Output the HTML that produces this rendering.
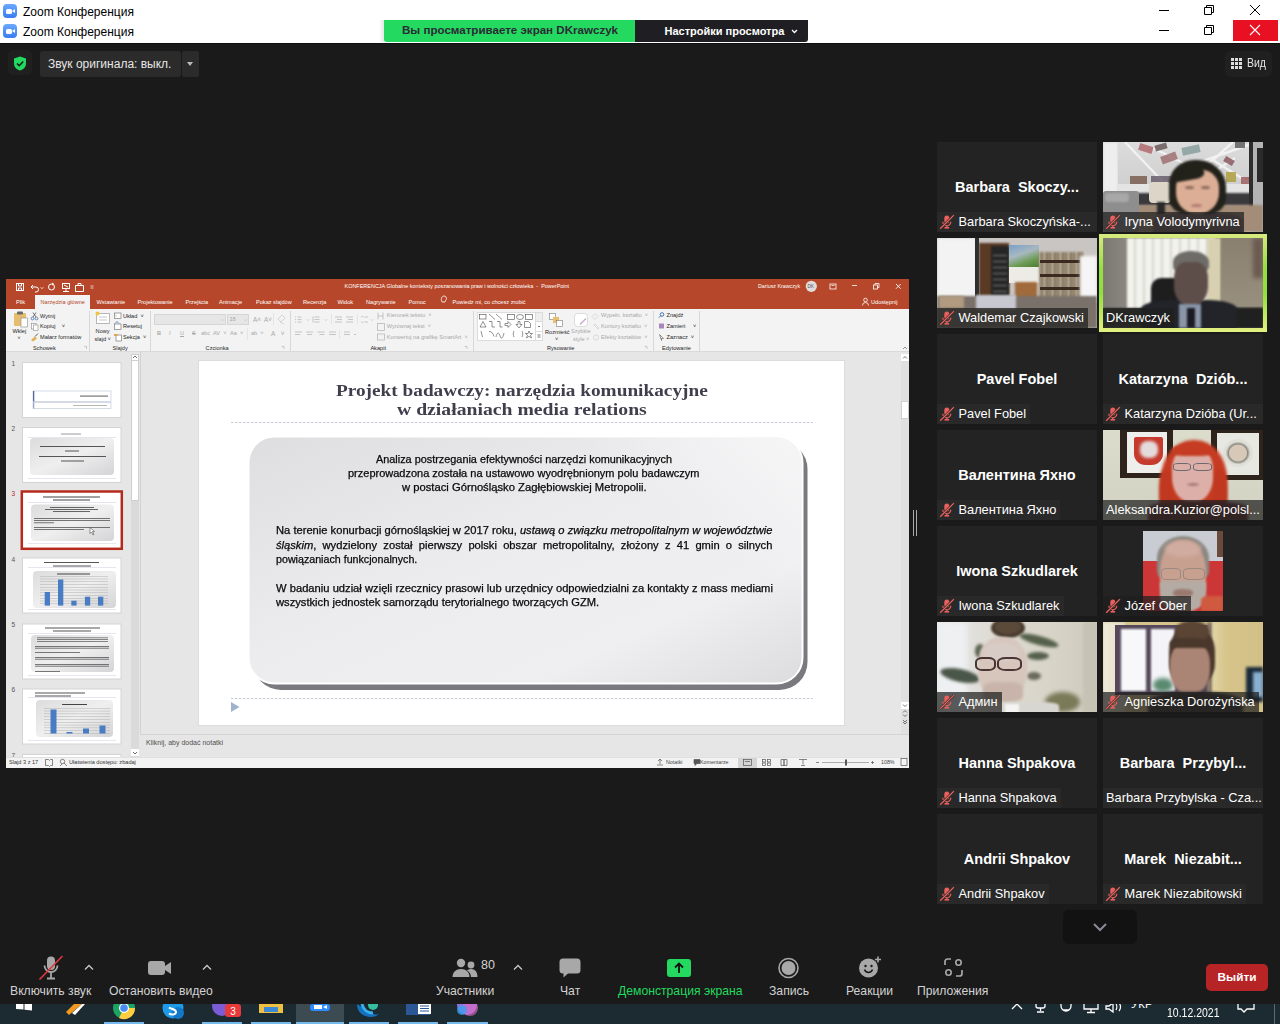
<!DOCTYPE html>
<html><head><meta charset="utf-8">
<style>
*{box-sizing:border-box;margin:0;padding:0}
html,body{width:1280px;height:1024px;overflow:hidden;background:#1a1a1a;font-family:"Liberation Sans",sans-serif}
.a{position:absolute}
.tb{background:#fff;left:0;width:1280px}
.ttl{font-size:12px;color:#000;white-space:nowrap}
.zi{width:14px;height:14px;border-radius:4px;background:linear-gradient(#6aa8ff,#3a7cf0)}
.zi:before{content:"";position:absolute;left:3px;top:4.5px;width:5.5px;height:5px;background:#fff;border-radius:1.5px}
.zi:after{content:"";position:absolute;left:8.5px;top:4.5px;width:0;height:0;border-top:2.5px solid transparent;border-bottom:2.5px solid transparent;border-right:3px solid #fff}
/* participants */
.tile{position:absolute;width:160px;height:90px;background:#232323;overflow:hidden}
.big{position:absolute;left:0;right:0;top:37px;text-align:center;color:#fff;font-weight:bold;font-size:14.5px;white-space:nowrap}
.lab{position:absolute;left:0;bottom:0;height:20px;background:rgba(42,42,42,.92);color:#fff;font-size:12.8px;line-height:20px;white-space:nowrap;padding:0 4px 0 21.5px}
.lab.nm{padding-left:3px}
.tile.v .lab{background:rgba(30,30,30,.72)}
.mic{position:absolute;left:4px;top:3px;width:14px;height:14px}
.tbtn{position:absolute;color:#d2d2d2;font-size:12.2px;white-space:nowrap;text-align:center}
</style></head>
<body>
<!-- title bars -->
<div class="a tb" style="top:0;height:43px"></div><div class="a" style="left:0;top:43px;width:1280px;height:1px;background:#0e0e0e"></div><div class="a" style="left:379px;top:20px;width:6px;height:22px;background:linear-gradient(90deg,rgba(0,0,0,0),rgba(0,0,0,.12))"></div>
<div class="a zi" style="left:3px;top:4px"></div>
<div class="a ttl" style="left:23px;top:5px">Zoom Конференция</div>
<div class="a zi" style="left:3px;top:24px"></div>
<div class="a ttl" style="left:23px;top:25.2px">Zoom Конференция</div>

<!-- green banner -->
<div class="a" style="left:384px;top:20px;width:251px;height:22px;background:#23d95f;border-bottom-left-radius:3px"></div>
<div class="a" style="left:402px;top:24.3px;font-size:11.57px;font-weight:bold;color:#2b2b35;white-space:nowrap">Вы просматриваете экран DKrawczyk</div>
<div class="a" style="left:635px;top:20px;width:173px;height:22px;background:#1f1f23;border-bottom-right-radius:3px"></div>
<div class="a" style="left:664.5px;top:25.4px;font-size:11px;font-weight:bold;color:#fff;white-space:nowrap">Настройки просмотра</div><svg class="a" style="left:791px;top:29px" width="7" height="5" viewBox="0 0 7 5"><path d="M1 1l2.5 2.5L6 1" stroke="#fff" stroke-width="1.3" fill="none"/></svg>


<!-- window controls -->
<svg class="a" style="left:1150px;top:0" width="130" height="42" viewBox="0 0 130 42">
<g stroke="#000" stroke-width="1" fill="none">
<path d="M9 10.5h10"/><path d="M9 30.5h10"/>
<path d="M54.5 7.5h7v7h-7z M56.5 7.5v-2h7v7h-2"/>
<path d="M54.5 27.5h7v7h-7z M56.5 27.5v-2h7v7h-2"/>
<path d="M100 5l10 10M110 5l-10 10"/>
</g>
<rect x="83" y="20" width="45" height="21" fill="#e81123"/>
<path d="M100 25l10 10M110 25l-10 10" stroke="#fff" stroke-width="1.1"/>
</svg>

<!-- top toolbar row -->
<div class="a" style="left:8px;top:50px;width:24px;height:25px;background:#202020;border-radius:5px"></div>
<svg class="a" style="left:13px;top:56px" width="14" height="15" viewBox="0 0 14 15"><path d="M7 0.5L13 2.5V7.5C13 11 10.5 13.5 7 14.5C3.5 13.5 1 11 1 7.5V2.5Z" fill="#23d95f"/><path d="M4 7.5l2.2 2.2L10.2 5.5" stroke="#1a1a1a" stroke-width="1.6" fill="none"/></svg>
<div class="a" style="left:40px;top:51px;width:141px;height:26px;background:#2b2b2b;border-radius:3px"></div>
<div class="a" style="left:48px;top:57.4px;font-size:12px;color:#e6e6e6;white-space:nowrap">Звук оригинала: выкл.</div>
<div class="a" style="left:182px;top:51px;width:17px;height:26px;background:#2b2b2b;border-radius:2px"></div>
<div class="a" style="left:187px;top:62px;width:0;height:0;border-left:3.5px solid transparent;border-right:3.5px solid transparent;border-top:4px solid #bbb"></div>
<div class="a" style="left:1224.5px;top:51px;width:47px;height:26px;background:#202020;border-radius:6px"></div>
<svg class="a" style="left:1231px;top:58px" width="11" height="11" viewBox="0 0 11 11" fill="#ddd"><rect x="0" y="0" width="3" height="3"/><rect x="4" y="0" width="3" height="3"/><rect x="8" y="0" width="3" height="3"/><rect x="0" y="4" width="3" height="3"/><rect x="4" y="4" width="3" height="3"/><rect x="8" y="4" width="3" height="3"/><rect x="0" y="8" width="3" height="3"/><rect x="4" y="8" width="3" height="3"/><rect x="8" y="8" width="3" height="3"/></svg>
<div class="a" style="left:1247px;top:55.9px;font-size:12.2px;color:#e6e6e6;transform-origin:0 0;transform:scaleX(.86)">Вид</div>

<!-- splitter -->
<div class="a" style="left:913px;top:510px;width:1px;height:26px;background:#aaa"></div>
<div class="a" style="left:916px;top:510px;width:1px;height:26px;background:#aaa"></div>

<!-- PPT WINDOW -->
<!--PPT-->
<div class="a" id="ppt" style="left:6px;top:279px;width:903px;height:489px;background:#e6e6e6;overflow:hidden;font-family:'Liberation Sans',sans-serif">
<style>
#ppt .t{position:absolute;white-space:nowrap;font-size:5.6px;color:#262626;line-height:1}
#ppt .w{color:#fff}
#ppt .g{color:#a8a8a8}
</style>
<!-- title bar + tabs -->
<div class="a" style="left:0;top:0;width:903px;height:30px;background:#b7472a"></div>
<svg class="a" style="left:0;top:0" width="903" height="30" viewBox="0 0 903 30">
<g stroke="#fff" stroke-width="1" fill="none">
<rect x="10.5" y="4.5" width="7" height="7"/><path d="M12.5 4.5v2.5h3v-2.5M12.5 11.5v-2.5h3v2.5"/>
<path d="M25 8h5a2.5 2.5 0 0 1 0 5h-1M25 8l2-2M25 8l2 2"/>
<path d="M34.5 8.5l1.5 1 1.5-1" stroke-width=".7"/>
<circle cx="45.5" cy="8" r="3"/><path d="M46 4l1.5 1-1.5 1"/>
<rect x="56.5" y="4.5" width="7" height="5"/><path d="M60 9.5v3M57 12.5h6M58 6l4 2"/>
<path d="M69.5 6.5h8v6h-8zM72 6.5v-2h3v2" />
<path d="M84.5 7h3M84.5 9h3" stroke-width=".7"/>
</g>
<g stroke="#fff" stroke-width="1" fill="none">
<rect x="824" y="5" width="6" height="5" stroke-width=".8"/><path d="M825.5 6.5h3" stroke-width=".7"/>
<path d="M846 6.5h5" stroke-width=".8"/>
<rect x="867.5" y="6" width="4" height="4" stroke-width=".8"/><path d="M869 6v-1.5h4v4h-1.5" stroke-width=".8"/>
<path d="M890 5l4.7 4.7M894.7 5l-4.7 4.7" stroke-width=".9"/>
<circle cx="859.5" cy="21" r="1.8" stroke-width=".8"/><path d="M856.5 26.5a3 3 0 0 1 6 0" stroke-width=".8"/>
</g>
<circle cx="805.3" cy="7.3" r="5.6" fill="#e0dcdc"/>
<path d="M435.5 19.5a2.5 2.5 0 1 1 4 2l-.5 1.5h-3l-.5-1.5a2.5 2.5 0 0 1 0-2z" stroke="#fff" stroke-width=".8" fill="none"/>
</svg>
<div class="t w" style="left:338.5px;top:5px;font-size:5.48px">KONFERENCJA Globalne konteksty poszanowania praw i wolności człowieka&nbsp; - &nbsp;PowerPoint</div>
<div class="t w" style="left:752px;top:5px;font-size:5.3px">Dariusz Krawczyk</div>
<div class="t" style="left:801.5px;top:5.5px;font-size:4.6px;color:#555">DK</div>
<div class="a" style="left:29px;top:16px;width:55px;height:14px;background:#f3f3f3"></div>
<div class="t w" style="left:10px;top:20.5px">Plik</div>
<div class="t" style="left:34.5px;top:20.5px;color:#b7472a">Narzędzia główne</div>
<div class="t w" style="left:90.5px;top:20.5px">Wstawianie</div>
<div class="t w" style="left:131.5px;top:20.5px">Projektowanie</div>
<div class="t w" style="left:179.5px;top:20.5px">Przejścia</div>
<div class="t w" style="left:213px;top:20.5px">Animacje</div>
<div class="t w" style="left:250px;top:20.5px">Pokaz slajdów</div>
<div class="t w" style="left:297px;top:20.5px">Recenzja</div>
<div class="t w" style="left:331.5px;top:20.5px">Widok</div>
<div class="t w" style="left:360px;top:20.5px">Nagrywanie</div>
<div class="t w" style="left:402.5px;top:20.5px">Pomoc</div>
<div class="t w" style="left:446.5px;top:20.5px">Powiedz mi, co chcesz zrobić</div>
<div class="t w" style="left:865px;top:20.5px">Udostępnij</div>
<!-- ribbon -->
<div class="a" style="left:0;top:30px;width:903px;height:43px;background:#f3f3f3;border-bottom:1px solid #dadada"></div>
<!--RIB--><svg class="a" style="left:0;top:0" width="903" height="75" viewBox="6 279 903 75"><rect x="89" y="311" width="1" height="40" fill="#d8d8d8"/><rect x="150" y="311" width="1" height="40" fill="#d8d8d8"/><rect x="290" y="311" width="1" height="40" fill="#d8d8d8"/><rect x="473" y="311" width="1" height="40" fill="#d8d8d8"/><rect x="653" y="311" width="1" height="40" fill="#d8d8d8"/><rect x="699" y="311" width="1" height="40" fill="#d8d8d8"/>
<rect x="14" y="313" width="12" height="13" rx="1" fill="#e6bd6c"/><rect x="17" y="311.5" width="6" height="3" rx="1" fill="#6a6a6a"/><rect x="21" y="318" width="6.5" height="9" fill="#fff" stroke="#8a8a8a" stroke-width=".6"/>
<g fill="none" stroke-width=".8"><circle cx="32.5" cy="318.5" r="1.4" stroke="#4a6ea8"/><circle cx="36.5" cy="318.5" r="1.4" stroke="#4a6ea8"/><path d="M33 317l3-4.5M36 317l-3-4.5" stroke="#555"/></g>
<rect x="31.5" y="323.5" width="4.5" height="5.5" fill="#fff" stroke="#8a8a8a" stroke-width=".6"/><rect x="33.5" y="325" width="4.5" height="5.5" fill="#fff" stroke="#8a8a8a" stroke-width=".6"/>
<path d="M31 340l4-3.5 2 2-4 3z" fill="#e0b050"/><path d="M35 336.5l3-3" stroke="#555" stroke-width="1"/>
<path d="M84 346.5h2.5v2.5" stroke="#aaa" stroke-width=".6" fill="none"/>
<rect x="96.5" y="313.5" width="13" height="10" fill="#fff" stroke="#9a9a9a" stroke-width=".7"/><path d="M99 317h8M99 320h8" stroke="#bbb" stroke-width=".8"/><circle cx="97.5" cy="313.5" r="2" fill="#f2c33c"/>
<rect x="114.5" y="313" width="6.5" height="5.5" fill="#fff" stroke="#7a7a7a" stroke-width=".7"/><path d="M116 314.5v2.5" stroke="#aaa" stroke-width=".6"/>
<rect x="114.5" y="324" width="6.5" height="5.5" fill="#fff" stroke="#7a7a7a" stroke-width=".7"/><path d="M115 323.5l2-2 2 2" stroke="#3a6ab0" stroke-width=".8" fill="none"/>
<rect x="116" y="335" width="5.5" height="6" fill="#fff" stroke="#7a7a7a" stroke-width=".7"/><rect x="114" y="334" width="3.5" height="1.8" fill="#e0a040"/>
<rect x="154.5" y="314.5" width="71" height="10" fill="#e6e6e6" stroke="#d6d6d6"/><rect x="227.5" y="314.5" width="21" height="10" fill="#e6e6e6" stroke="#d6d6d6"/>
<path d="M221.5 319.5l1 1 1-1M244.5 319.5l1 1 1-1" stroke="#b0b0b0" stroke-width=".6" fill="none"/>
<path d="M273.5 313v12M247.5 328v12" stroke="#dcdcdc" stroke-width=".7"/>
<g stroke="#b4b4b4" stroke-width=".5" fill="none"><path d="M278 319l4-4 3 3-4 4zM280 322l4 2" /></g>
<path d="M281.5 346.5h2.5v2.5" stroke="#aaa" stroke-width=".6" fill="none"/>
<g stroke="#b8b8b8" stroke-width=".8" fill="none">
<path d="M295 317h1M297.5 317h4M295 319.5h1M297.5 319.5h4M295 322h1M297.5 322h4"/>
<path d="M313 316.5v6M314.5 317h5M314.5 319.5h5M314.5 322h5"/>
<path d="M335 317h7M337 319.5h5M335 322h7M346 317h7M348 319.5h5M346 322h7"/>
<path d="M361 317.5l1.5-1.5 1.5 1.5M361 321.5l1.5 1.5 1.5-1.5M365 317h3M365 322h3"/>
<path d="M295 332h7M295 334.5h5M306 332h7M307 334.5h5M317.5 332h7M319.5 334.5h5M329 332h7M329 334.5h7M344 332h6M344 334.5h6"/>
<path d="M378 312.5v7M383 312.5v7M378 316h5"/>
<rect x="377.5" y="323.5" width="7" height="7"/>
<rect x="377.5" y="334" width="7" height="6"/>
<path d="M307 319.5l1 1 1-1M325 319.5l1 1 1-1M371 319.5l1 1 1-1M354 334l1 1 1-1"/>
</g>
<path d="M331.5 314v10M357.5 314v10M339.5 330v9" stroke="#dcdcdc" stroke-width=".7"/>
<path d="M464.5 346.5h2.5v2.5" stroke="#aaa" stroke-width=".6" fill="none"/>
<rect x="477.5" y="312.5" width="65" height="28" fill="#fff" stroke="#dcdcdc"/>
<rect x="535.5" y="312.5" width="7" height="9" fill="#eee" stroke="#dcdcdc"/><rect x="535.5" y="321.5" width="7" height="10" fill="#fff" stroke="#dcdcdc"/><rect x="535.5" y="331.5" width="7" height="9" fill="#fff" stroke="#dcdcdc"/>
<g stroke="#4a4a4a" stroke-width=".6" fill="none">
<rect x="479.5" y="314.5" width="6.5" height="4.5"/><path d="M489 314l6 5.5M496 314l6 5.5"/><rect x="507.5" y="314.5" width="7" height="5"/><ellipse cx="520" cy="317" rx="3.5" ry="2.5"/><rect x="525.5" y="314.5" width="7" height="5"/>
<path d="M480 327l3-5.5 3 5.5z M489 321.5h3v5.5h3M497 321.5h3v5.5h2.5M505 323.5h3v-2l3 3-3 3v-2h-3zM518 321.5v3h-2l3 3.5 3-3.5h-2v-3z M524.5 321.5h4l2 2v4h-6z"/>
<path d="M481 331l1.5 6M489 331.5c3 0 4 2 5 5M496 337c1-5 3-5 4-1s3 2 4-3M514 331c-1 2-1 4 0 6M522 331c1 2 1 4 0 6M529 331l1 2.5h2.5l-2 1.8 1 2.7-2.5-1.7-2.5 1.7 1-2.7-2-1.8h2.5z"/>
</g>
<path d="M538 326.5h2M537.5 335h3M537.5 337h3" stroke="#555" stroke-width=".8"/>
<rect x="549.5" y="313.5" width="6" height="6" fill="#fff" stroke="#7a7a7a" stroke-width=".6"/><rect x="553" y="317" width="6" height="6" fill="#e6c06a"/><rect x="556.5" y="320.5" width="6" height="6" fill="#fff" stroke="#7a7a7a" stroke-width=".6"/>
<rect x="574.5" y="313.5" width="13" height="13" rx="3" fill="#fff" stroke="#cfcfcf" stroke-width=".7"/><path d="M580 324.5l6-6" stroke="#c8a8c8" stroke-width="1.2"/>
<g stroke="#cdcdcd" stroke-width=".7" fill="none"><path d="M595 313.5l3 3-3 3-3-3z"/><path d="M595 324l4 4-1 1-4-4z"/><circle cx="596" cy="337.5" r="2.5"/></g>
<path d="M644.5 346.5h2.5v2.5" stroke="#aaa" stroke-width=".6" fill="none"/>
<g stroke="#3a6ab0" stroke-width=".9" fill="none"><circle cx="662" cy="314.5" r="1.8"/><path d="M660.8 315.7l-2 2"/></g>
<path d="M659 323.5h5v5h-5z" fill="#a888bc"/><path d="M659.5 334.5l4 4h-2v2z" stroke="#555" stroke-width=".6" fill="none"/>
<path d="M903 349l2-2 2 2" stroke="#666" stroke-width=".7" fill="none"/>
</svg>
<div class="t " style="left:6.5px;top:50.4px;">Wklej</div>
<div class="t " style="left:11.5px;top:57.4px;font-size:5px">˅</div>
<div class="t " style="left:34.0px;top:34.7px;">Wytnij</div>
<div class="t " style="left:34.0px;top:45.4px;">Kopiuj&nbsp;&nbsp;&nbsp;&nbsp;˅</div>
<div class="t " style="left:34.0px;top:55.9px;">Malarz formatów</div>
<div class="t " style="left:27.0px;top:67.2px;">Schowek</div>
<div class="t " style="left:89.6px;top:50.4px;">Nowy</div>
<div class="t " style="left:88.5px;top:58.4px;">slajd ˅</div>
<div class="t " style="left:117.0px;top:34.7px;">Układ&nbsp; ˅</div>
<div class="t " style="left:117.0px;top:45.4px;">Resetuj</div>
<div class="t " style="left:117.0px;top:55.9px;">Sekcja&nbsp; ˅</div>
<div class="t " style="left:106.5px;top:67.2px;">Slajdy</div>
<div class="t g" style="left:223.4px;top:38.0px;">18</div>
<div class="t g" style="left:151.0px;top:52.4px;font-weight:bold">B</div>
<div class="t g" style="left:163.0px;top:52.4px;font-style:italic">I</div>
<div class="t g" style="left:174.0px;top:52.4px;text-decoration:underline">U</div>
<div class="t g" style="left:186.0px;top:52.4px;text-decoration:line-through">S</div>
<div class="t g" style="left:195.0px;top:52.4px;">abc</div>
<div class="t g" style="left:207.0px;top:52.4px;">AV&nbsp;&nbsp;˅</div>
<div class="t g" style="left:224.0px;top:52.4px;">Aa&nbsp;&nbsp;˅</div>
<div class="t g" style="left:245.0px;top:52.4px;">ab&nbsp;&nbsp;˅</div>
<div class="t g" style="left:265.0px;top:52.4px;font-size:6.5px">A&nbsp;&nbsp;&nbsp;˅</div>
<div class="t g" style="left:247.0px;top:38.0px;font-size:6.3px">A˄</div>
<div class="t g" style="left:258.0px;top:38.0px;font-size:6.3px">A˅</div>
<div class="t " style="left:199.6px;top:67.2px;">Czcionka</div>
<div class="t g" style="left:380.7px;top:34.1px;">Kierunek tekstu&nbsp; ˅</div>
<div class="t g" style="left:380.7px;top:45.4px;">Wyrównaj tekst&nbsp; ˅</div>
<div class="t g" style="left:380.7px;top:56.1px;">Konwertuj na grafikę SmartArt&nbsp; ˅</div>
<div class="t " style="left:364.4px;top:67.2px;">Akapit</div>
<div class="t " style="left:539.0px;top:50.6px;">Rozmieść</div>
<div class="t " style="left:549.0px;top:57.7px;">˅</div>
<div class="t g" style="left:565.0px;top:50.4px;">Szybkie</div>
<div class="t g" style="left:567.0px;top:58.1px;">style ˅</div>
<div class="t g" style="left:595.0px;top:34.1px;">Wypełn. kształtu&nbsp; ˅</div>
<div class="t g" style="left:595.0px;top:45.4px;">Kontury kształtu&nbsp; ˅</div>
<div class="t g" style="left:595.0px;top:56.2px;">Efekty kształtów&nbsp; ˅</div>
<div class="t " style="left:541.0px;top:67.2px;">Rysowanie</div>
<div class="t " style="left:660.6px;top:34.3px;">Znajdź</div>
<div class="t " style="left:660.6px;top:45.4px;">Zamień&nbsp;&nbsp;&nbsp;&nbsp; ˅</div>
<div class="t " style="left:660.6px;top:56.2px;">Zaznacz&nbsp; ˅</div>
<div class="t " style="left:656.0px;top:67.2px;">Edytowanie</div><!--/RIB-->
<!-- content -->
<!--CONT--><div class="a" style="left:134px;top:73px;width:1px;height:383px;background:#d2d2d2"></div>
<div class="a" style="left:125px;top:75px;width:8px;height:403px;background:#dadada"></div>
<div class="a" style="left:125px;top:75px;width:8px;height:147px;background:#fff;border:1px solid #cfcfcf"></div>
<div class="a" style="left:125px;top:75px;width:8px;height:7px;background:#fff;border:1px solid #cfcfcf"></div>
<div class="a" style="left:125px;top:470px;width:8px;height:7px;background:#fff"></div>
<svg class="a" style="left:0;top:0" width="140" height="480" viewBox="6 279 140 480"><defs><linearGradient id="gb" x1="0" y1="0" x2="1" y2="1"><stop offset="0" stop-color="#dcdcdc"/><stop offset=".5" stop-color="#efeff0"/><stop offset="1" stop-color="#d4d4d6"/></linearGradient></defs><rect x="22.5" y="362.5" width="98.5" height="55" fill="#fff" stroke="#d4d4d4" stroke-width="1"/><rect x="33" y="391" width="78" height="10.5" fill="#fff" stroke="#b8c4d8" stroke-width=".6"/><rect x="33" y="391" width="1.3" height="10.5" fill="#5a6a9a"/><rect x="33" y="402.5" width="78" height="6" fill="#fff" stroke="#b8c4d8" stroke-width=".6"/><rect x="33" y="402.5" width="1.3" height="6" fill="#9aaacc"/><rect x="80" y="395.5" width="28" height="1.2" fill="#777"/><rect x="73" y="405" width="34" height=".7" fill="#999"/><rect x="22.5" y="427.5" width="98.5" height="55" fill="#fff" stroke="#d4d4d4" stroke-width="1"/><rect x="61" y="433.5" width="20" height="1" fill="#999"/><rect x="28" y="437" width="88" height=".5" fill="#c8d0dc"/><rect x="30" y="438" width="84" height="37" rx="4" fill="url(#gb)"/><rect x="40" y="446" width="65" height="1" fill="#555" opacity="1"/><rect x="65" y="450.5" width="14" height="1" fill="#555"/><rect x="39" y="456" width="67" height="1" fill="#555" opacity="1"/><rect x="61" y="460.5" width="23" height="1" fill="#555"/><rect x="28" y="478.5" width="88" height=".5" fill="#c8d0dc"/><rect x="21.8" y="491.5" width="100" height="57.3" fill="#fff" stroke="#b52a1c" stroke-width="2.5"/><rect x="43" y="496.5" width="57" height="1" fill="#444"/><rect x="53" y="499.5" width="37" height="1" fill="#444"/><rect x="28" y="502" width="88" height=".5" fill="#c8d0dc"/><rect x="31" y="504.5" width="83" height="36.5" rx="4" fill="url(#gb)"/><rect x="50" y="507" width="44" height=".8" fill="#444"/><rect x="45" y="509" width="53" height=".8" fill="#444"/><rect x="53" y="511" width="37" height=".8" fill="#444"/><rect x="34" y="518.0" width="76" height="0.8" fill="#555" opacity="1"/><rect x="34" y="520.2" width="76" height="0.8" fill="#555" opacity="1"/><rect x="34" y="522.4" width="20" height=".8" fill="#555"/><rect x="34" y="527" width="76" height="0.8" fill="#555" opacity="1"/><rect x="34" y="529.2" width="50" height=".8" fill="#555"/><rect x="28" y="543.5" width="88" height=".5" fill="#c8d0dc"/><path d="M90 527.5v6l1.5-1.5 1.5 3 1-.5-1.5-3h2z" fill="#fff" stroke="#333" stroke-width=".5"/><rect x="22.5" y="558.0" width="98.5" height="55" fill="#fff" stroke="#d4d4d4" stroke-width="1"/><rect x="44" y="562" width="55" height="1" fill="#555"/><rect x="53" y="565.5" width="38" height="1" fill="#555"/><rect x="28" y="567.5" width="88" height=".5" fill="#c8d0dc"/><rect x="33" y="571" width="83" height="37" rx="4" fill="url(#gb)"/><rect x="57" y="573.5" width="33" height="1" fill="#444"/><rect x="40" y="576.0" width="68" height="0.5" fill="#b0b0b0" opacity="1"/><rect x="40" y="578.75" width="68" height="0.5" fill="#b0b0b0" opacity="1"/><rect x="40" y="581.5" width="68" height="0.5" fill="#b0b0b0" opacity="1"/><rect x="40" y="584.25" width="68" height="0.5" fill="#b0b0b0" opacity="1"/><rect x="40" y="587.0" width="68" height="0.5" fill="#b0b0b0" opacity="1"/><rect x="40" y="589.75" width="68" height="0.5" fill="#b0b0b0" opacity="1"/><rect x="40" y="592.5" width="68" height="0.5" fill="#b0b0b0" opacity="1"/><rect x="40" y="595.25" width="68" height="0.5" fill="#b0b0b0" opacity="1"/><rect x="40" y="598.0" width="68" height="0.5" fill="#b0b0b0" opacity="1"/><rect x="40" y="600.75" width="68" height="0.5" fill="#b0b0b0" opacity="1"/><rect x="40" y="603.5" width="68" height="0.5" fill="#b0b0b0" opacity="1"/><rect x="44.7" y="592" width="5.3" height="13.600000000000023" fill="#4a7cc4"/><rect x="58" y="579.5" width="5.3" height="26.100000000000023" fill="#4a7cc4"/><rect x="71.3" y="600.7" width="5.3" height="4.899999999999977" fill="#4a7cc4"/><rect x="84.9" y="596.7" width="5.3" height="8.899999999999977" fill="#4a7cc4"/><rect x="98" y="596.7" width="5.3" height="8.899999999999977" fill="#4a7cc4"/><rect x="28" y="609.5" width="88" height=".5" fill="#c8d0dc"/><rect x="22.5" y="624.0" width="98.5" height="55" fill="#fff" stroke="#d4d4d4" stroke-width="1"/><rect x="45" y="627.5" width="55" height="1" fill="#555"/><rect x="53" y="630.5" width="38" height="1" fill="#555"/><rect x="28" y="633" width="88" height=".5" fill="#c8d0dc"/><rect x="31" y="635" width="83" height="37" rx="4" fill="url(#gb)"/><rect x="37" y="637.5" width="71" height="0.7" fill="#555" opacity="1"/><rect x="37" y="639.3" width="71" height="0.7" fill="#555" opacity="1"/><rect x="37" y="641.1" width="71" height="0.7" fill="#555" opacity="1"/><rect x="35" y="646.0" width="74" height="0.7" fill="#444" opacity="1"/><rect x="35" y="647.8" width="74" height="0.7" fill="#444" opacity="1"/><rect x="35" y="652" width="45" height="0.7" fill="#444" opacity="1"/><rect x="35" y="657.0" width="74" height="0.7" fill="#444" opacity="1"/><rect x="35" y="658.8" width="74" height="0.7" fill="#444" opacity="1"/><rect x="35" y="664.0" width="74" height="0.7" fill="#444" opacity="1"/><rect x="35" y="665.8" width="74" height="0.7" fill="#444" opacity="1"/><rect x="35" y="671" width="25" height="0.7" fill="#444" opacity="1"/><rect x="28" y="675" width="88" height=".5" fill="#c8d0dc"/><rect x="22.5" y="689.0" width="98.5" height="55" fill="#fff" stroke="#d4d4d4" stroke-width="1"/><rect x="35" y="692.5" width="50" height="1" fill="#555"/><rect x="35" y="695.5" width="36" height="1" fill="#555"/><rect x="28" y="697.5" width="88" height=".5" fill="#c8d0dc"/><rect x="36" y="700" width="77" height="37" rx="4" fill="url(#gb)"/><rect x="62" y="704" width="25" height="1" fill="#444"/><rect x="44" y="708.0" width="66" height="0.5" fill="#b0b0b0" opacity="1"/><rect x="44" y="710.8" width="66" height="0.5" fill="#b0b0b0" opacity="1"/><rect x="44" y="713.6" width="66" height="0.5" fill="#b0b0b0" opacity="1"/><rect x="44" y="716.4" width="66" height="0.5" fill="#b0b0b0" opacity="1"/><rect x="44" y="719.2" width="66" height="0.5" fill="#b0b0b0" opacity="1"/><rect x="44" y="722.0" width="66" height="0.5" fill="#b0b0b0" opacity="1"/><rect x="44" y="724.8" width="66" height="0.5" fill="#b0b0b0" opacity="1"/><rect x="44" y="727.6" width="66" height="0.5" fill="#b0b0b0" opacity="1"/><rect x="44" y="730.4" width="66" height="0.5" fill="#b0b0b0" opacity="1"/><rect x="44" y="733.2" width="66" height="0.5" fill="#b0b0b0" opacity="1"/><rect x="50.5" y="709.5" width="6" height="24.0" fill="#4a7cc4"/><rect x="66.5" y="732" width="6" height="1.5" fill="#4a7cc4"/><rect x="83" y="728.5" width="6" height="5.0" fill="#4a7cc4"/><rect x="99.5" y="725.5" width="6" height="8.0" fill="#4a7cc4"/><rect x="28" y="740" width="88" height=".5" fill="#c8d0dc"/><rect x="22.5" y="754.5" width="98.5" height="55" fill="#fff" stroke="#d4d4d4" stroke-width="1"/><path d="M133 358l2-2 2 2M133 752l2 2 2-2" stroke="#444" stroke-width=".8" fill="none"/></svg>
<div class="t" style="left:5.5px;top:81.5px;font-size:6.5px;color:#555">1</div>
<div class="t" style="left:5.5px;top:147.0px;font-size:6.5px;color:#555">2</div>
<div class="t" style="left:5.5px;top:212.0px;font-size:6.5px;color:#b52a1c">3</div>
<div class="t" style="left:5.5px;top:277.5px;font-size:6.5px;color:#555">4</div>
<div class="t" style="left:5.5px;top:343.0px;font-size:6.5px;color:#555">5</div>
<div class="t" style="left:5.5px;top:408.0px;font-size:6.5px;color:#555">6</div>
<div class="t" style="left:5.5px;top:473.5px;font-size:6.5px;color:#555">7</div>
<div class="a" style="left:895px;top:75px;width:8px;height:381px;background:#e0e0e0"></div>
<div class="a" style="left:895px;top:75px;width:8px;height:7px;background:#fff"></div>
<div class="a" style="left:895px;top:122px;width:8px;height:18px;background:#fff;border:1px solid #d0d0d0"></div>
<div class="a" style="left:895px;top:423px;width:8px;height:7px;background:#fff"></div>
<svg class="a" style="left:0;top:0" width="903" height="489" viewBox="6 279 903 489"><path d="M903 358.5l2-2 2 2M903 704.5l2 2 2-2M903 712.5l2-2 2 2M903 714.5l2 2 2-2M903 720l2 2 2-2M903 722l2 2 2-2" stroke="#555" stroke-width=".8" fill="none"/></svg>
<div class="a" style="left:135px;top:455px;width:768px;height:1px;background:#d4d4d4"></div>
<div class="t" style="left:140px;top:460px;font-size:7px;color:#505050">Kliknij, aby dodać notatki</div>
<div class="a" style="left:0px;top:478px;width:903px;height:11px;background:#f3f3f3;border-top:1px solid #e0e0e0"></div>
<div class="t" style="left:3px;top:481.4px;font-size:5.6px;color:#333">Slajd 3 z 17</div>
<div class="t" style="left:63px;top:481.4px;font-size:5.6px;color:#333">Ułatwienia dostępu: zbadaj</div>
<div class="t" style="left:660px;top:480.5px;font-size:5.3px;color:#444">Notatki</div>
<div class="t" style="left:694px;top:480.5px;font-size:5.3px;color:#444">Komentarze</div>
<div class="t" style="left:875px;top:480.5px;font-size:5.3px;color:#444">108%</div>
<div class="a" style="left:732px;top:479px;width:19px;height:10px;background:#d4d4d4"></div>
<svg class="a" style="left:0;top:0" width="903" height="489" viewBox="6 279 903 489"><g stroke="#555" stroke-width=".7" fill="none">
<path d="M45.5 759.5h3l1 1 1-1h2v6h-2l-1 1-1-1h-3z"/>
<circle cx="62.5" cy="761.5" r="2.2"/><path d="M64 763l3 3M62 764l-2 2"/>
<path d="M660 759v5M658 761l2-2 2 2M657 765h6"/>
<path d="M694 759.5h6v4h-3l-2 2v-2h-1z" fill="#555"/>
<rect x="743.5" y="759.5" width="8" height="6"/><path d="M745 761.5h5"/>
<rect x="762.5" y="759.5" width="3" height="2.5"/><rect x="767.5" y="759.5" width="3" height="2.5"/><rect x="762.5" y="763" width="3" height="2.5"/><rect x="767.5" y="763" width="3" height="2.5"/>
<path d="M781 759.5h3v6h-3zM784 759.5h3v6h-3z"/>
<path d="M799 759.5h8M803 759.5v5M801 765.5h4"/>
<path d="M816 762.5h3M871 762.5h3M872.5 761v3"/>
<rect x="901" y="758.5" width="6" height="7"/>
</g><rect x="822" y="762" width="47" height="1" fill="#aaa"/><rect x="845" y="759.5" width="2" height="6" fill="#555"/></svg>
<!--SLIDE--><div class="a" style="left:193px;top:82px;width:645px;height:364px;background:#fff;box-shadow:0 0 0 1px #dcdcdc"></div>
<svg class="a" style="left:0;top:0" width="903" height="489" viewBox="6 279 903 489">
<defs><linearGradient id="bx" x1="0" y1="0" x2="1" y2="1"><stop offset="0" stop-color="#dedde0"/><stop offset=".45" stop-color="#ececee"/><stop offset=".75" stop-color="#efeff1"/><stop offset="1" stop-color="#dcdbde"/></linearGradient>
<linearGradient id="bx2" x1="1" y1="0" x2="0" y2="0.6"><stop offset="0" stop-color="#f6f6f7"/><stop offset=".3" stop-color="#f6f6f7" stop-opacity="0"/></linearGradient></defs>
<path d="M231 422.5H813" stroke="#c5ccd6" stroke-width="1" stroke-dasharray="2.5 1.5"/>
<path d="M231 698.5H813" stroke="#c5ccd6" stroke-width="1" stroke-dasharray="2.5 1.5"/>
<rect x="253" y="441" width="554.5" height="249" rx="28" fill="#7a797d"/>
<rect x="248.5" y="436.5" width="554" height="247" rx="26" fill="url(#bx)" stroke="#fff" stroke-width="2"/>
<rect x="249.5" y="437.5" width="552" height="245" rx="25" fill="url(#bx2)"/>
<path d="M231 702v10l8.5-5z" fill="#9fb3cc"/>
</svg><div class="a" style="left:329.90px;top:103.80px;white-space:nowrap;line-height:1;font-family:'Liberation Serif',serif;font-weight:bold;font-size:16.3px;color:#403e4c;transform-origin:0 0;transform:scaleX(1.1838);word-spacing:0.000px">Projekt badawczy: narzędzia komunikacyjne</div>
<div class="a" style="left:390.60px;top:122.60px;white-space:nowrap;line-height:1;font-family:'Liberation Serif',serif;font-weight:bold;font-size:16.3px;color:#403e4c;transform-origin:0 0;transform:scaleX(1.2103);word-spacing:0.000px">w działaniach media relations</div>
<div class="a" style="left:369.50px;top:175.70px;white-space:nowrap;line-height:1;font-family:'Liberation Sans',sans-serif;font-size:10.2px;color:#0a0a0a;-webkit-text-stroke:.25px #0a0a0a;transform-origin:0 0;transform:scaleX(1.0668);word-spacing:0.000px">Analiza postrzegania efektywności narzędzi komunikacyjnych</div>
<div class="a" style="left:341.50px;top:189.80px;white-space:nowrap;line-height:1;font-family:'Liberation Sans',sans-serif;font-size:10.2px;color:#0a0a0a;-webkit-text-stroke:.25px #0a0a0a;transform-origin:0 0;transform:scaleX(1.0795);word-spacing:0.000px">przeprowadzona została na ustawowo wyodrębnionym polu badawczym</div>
<div class="a" style="left:395.80px;top:204.20px;white-space:nowrap;line-height:1;font-family:'Liberation Sans',sans-serif;font-size:10.2px;color:#0a0a0a;-webkit-text-stroke:.25px #0a0a0a;transform-origin:0 0;transform:scaleX(1.1020);word-spacing:0.000px">w postaci Górnośląsko Zagłębiowskiej Metropolii.</div>
<div class="a" style="left:269.60px;top:246.90px;white-space:nowrap;line-height:1;font-family:'Liberation Sans',sans-serif;font-size:10.2px;color:#0a0a0a;-webkit-text-stroke:.25px #0a0a0a;transform-origin:0 0;transform:scaleX(1.0950);word-spacing:0.026px">Na terenie konurbacji górnośląskiej w 2017 roku, <i>ustawą o związku metropolitalnym w województwie</i></div>
<div class="a" style="left:269.60px;top:261.50px;white-space:nowrap;line-height:1;font-family:'Liberation Sans',sans-serif;font-size:10.2px;color:#0a0a0a;-webkit-text-stroke:.25px #0a0a0a;transform-origin:0 0;transform:scaleX(1.0950);word-spacing:2.877px"><i>śląskim</i>, wydzielony został pierwszy polski obszar metropolitalny, złożony z 41 gmin o silnych</div>
<div class="a" style="left:269.60px;top:275.90px;white-space:nowrap;line-height:1;font-family:'Liberation Sans',sans-serif;font-size:10.2px;color:#0a0a0a;-webkit-text-stroke:.25px #0a0a0a;transform-origin:0 0;transform:scaleX(1.0482);word-spacing:0.000px">powiązaniach funkcjonalnych.</div>
<div class="a" style="left:269.60px;top:304.90px;white-space:nowrap;line-height:1;font-family:'Liberation Sans',sans-serif;font-size:10.2px;color:#0a0a0a;-webkit-text-stroke:.25px #0a0a0a;transform-origin:0 0;transform:scaleX(1.0950);word-spacing:0.105px">W badaniu udział wzięli rzecznicy prasowi lub urzędnicy odpowiedzialni za kontakty z mass mediami</div>
<div class="a" style="left:269.60px;top:319.40px;white-space:nowrap;line-height:1;font-family:'Liberation Sans',sans-serif;font-size:10.2px;color:#0a0a0a;-webkit-text-stroke:.25px #0a0a0a;transform-origin:0 0;transform:scaleX(1.0957);word-spacing:0.000px">wszystkich jednostek samorządu terytorialnego tworzących GZM.</div><!--/SLIDE--><!--/CONT-->
</div>
<!--/PPT-->

<!-- PARTICIPANTS -->
<!--GRID-->
<div class="tile" style="left:937px;top:142px"><div class="big">Barbara&nbsp; Skoczy...</div><div class="lab" style="right:0;"><svg class="a" style="left:0;top:0" width="20" height="20" viewBox="0 0 20 20"><g fill="#e8605c" stroke="none"><rect x="7.3" y="3.6" width="5" height="8" rx="2.5"/><rect x="7.5" y="15" width="4.6" height="1.6"/></g><g stroke="#e8605c" fill="none" stroke-width="1.2"><path d="M5.8 9.8a4 4 0 0 0 8 0"/><path d="M9.8 13.8v1.6"/></g><path d="M3.2 16.8L16.9 3.1" stroke="#2b2b2b" stroke-width="2.4"/><path d="M3.2 16.8L16.9 3.1" stroke="#e8605c" stroke-width="1.3"/></svg>Barbara Skoczyńska-...</div></div>
<div class="tile v" style="left:1103px;top:142px"><div class="a" style="left:0px;top:0px;width:160px;height:90px;background:#d0d0d0;border-radius:0;"></div><div class="a" style="left:0px;top:0px;width:15px;height:55px;background:#eeeeee;border-radius:0;filter:blur(1px);"></div><div class="a" style="left:15px;top:0px;width:133px;height:44px;background:linear-gradient(180deg,#dcdcdc,#cfcfcf);border-radius:0;"></div><svg class="a" style="left:0;top:0" width="160" height="90" viewBox="0 0 160 90"><g stroke="#f4f4f4" stroke-width="2.4" fill="none" opacity=".9"><path d="M22 0L62 42M50 6L86 24L148 2M60 42L110 18L148 42M110 18L130 0M95 40L132 16"/></g><g opacity=".85"><rect x="36" y="3" width="14" height="7" fill="#b06a70" transform="rotate(18 43 6)"/><rect x="52" y="2" width="12" height="6" fill="#6a5a5a" transform="rotate(-15 58 5)"/><rect x="79" y="4" width="18" height="8" fill="#8aa0a0" transform="rotate(-12 88 8)"/><rect x="58" y="12" width="16" height="8" fill="#a07070" transform="rotate(-20 66 16)"/><rect x="121" y="16" width="10" height="6" fill="#8a5a60" transform="rotate(30 126 19)"/><rect x="27" y="34" width="17" height="8" fill="#7a6050"/><rect x="48" y="34" width="21" height="8" fill="#6a6070"/><rect x="123" y="30" width="10" height="10" fill="#b0a040"/><rect x="138" y="35" width="9" height="7" fill="#a06060"/><rect x="132" y="0" width="10" height="6" fill="#606060"/></g></svg><div class="a" style="left:15px;top:42px;width:133px;height:10px;background:#e4e4e4;border-radius:0;"></div><div class="a" style="left:34px;top:51px;width:114px;height:13px;background:#3a3a3c;border-radius:0;filter:blur(0.8px);"></div><div class="a" style="left:146px;top:0px;width:4px;height:68px;background:#2e2e2e;border-radius:0;filter:blur(0.5px);"></div><div class="a" style="left:150px;top:0px;width:10px;height:90px;background:#b4b4b4;border-radius:0;"></div><div class="a" style="left:154px;top:6px;width:6px;height:34px;background:#2a2a2a;border-radius:0;filter:blur(0.6px);"></div><div class="a" style="left:33px;top:63px;width:127px;height:27px;background:#a38c78;border-radius:0;filter:blur(1px);"></div><div class="a" style="left:0px;top:49px;width:36px;height:41px;background:#8e8e8e;border-radius:3px;filter:blur(0.7px);"></div><div class="a" style="left:2px;top:51px;width:24px;height:9px;background:#a8a8a8;border-radius:3px;filter:blur(1px);"></div><div class="a" style="left:46px;top:40px;width:22px;height:21px;background:#ddd6c8;border-radius:4px;filter:blur(0.7px);"></div><div class="a" style="left:54px;top:60px;width:8px;height:12px;background:#2a2a2a;border-radius:0;filter:blur(0.8px);"></div><div class="a" style="left:50px;top:70px;width:90px;height:22px;background:#7e6468;border-radius:40% 40% 0 0;filter:blur(1.2px);"></div><div class="a" style="left:66px;top:18px;width:57px;height:54px;background:#22221a;border-radius:45% 50% 30% 30%;filter:blur(1px);"></div><div class="a" style="left:73px;top:28px;width:43px;height:44px;background:#dcae96;border-radius:40% 40% 48% 48%;filter:blur(1px);"></div><div class="a" style="left:71px;top:24px;width:30px;height:14px;background:#22221a;border-radius:50% 40% 30% 10%;filter:blur(1px);transform:rotate(-10deg)"></div><div class="a" style="left:82px;top:44px;width:9px;height:3px;background:#8a6a5a;border-radius:50%;filter:blur(1px);"></div><div class="a" style="left:98px;top:44px;width:9px;height:3px;background:#8a6a5a;border-radius:50%;filter:blur(1px);"></div><div class="a" style="left:88px;top:62px;width:11px;height:3px;background:#b07a72;border-radius:50%;filter:blur(1px);"></div><div class="lab" style=""><svg class="a" style="left:0;top:0" width="20" height="20" viewBox="0 0 20 20"><g fill="#e8605c" stroke="none"><rect x="7.3" y="3.6" width="5" height="8" rx="2.5"/><rect x="7.5" y="15" width="4.6" height="1.6"/></g><g stroke="#e8605c" fill="none" stroke-width="1.2"><path d="M5.8 9.8a4 4 0 0 0 8 0"/><path d="M9.8 13.8v1.6"/></g><path d="M3.2 16.8L16.9 3.1" stroke="#2b2b2b" stroke-width="2.4"/><path d="M3.2 16.8L16.9 3.1" stroke="#e8605c" stroke-width="1.3"/></svg>Iryna Volodymyrivna</div></div>
<div class="tile v" style="left:937px;top:238px"><div class="a" style="left:0px;top:0px;width:160px;height:90px;background:#c9c5c2;border-radius:0;"></div><div class="a" style="left:0px;top:0px;width:40px;height:70px;background:#f3f3f3;border-radius:0;filter:blur(1.5px);"></div><div class="a" style="left:38px;top:0px;width:4px;height:65px;background:#2a3030;border-radius:0;filter:blur(0.6px);"></div><div class="a" style="left:42px;top:5px;width:30px;height:55px;background:#5a3a24;border-radius:0;filter:blur(0.8px);"></div><div class="a" style="left:54px;top:8px;width:18px;height:52px;background:#262626;border-radius:0;filter:blur(0.8px);"></div><div class="a" style="left:56px;top:12px;width:14px;height:46px;background:repeating-linear-gradient(180deg,transparent 0,transparent 5px,#cfcfcf 5px,#cfcfcf 6px);border-radius:0;filter:blur(0.9px);opacity:.5"></div><div class="a" style="left:72px;top:7px;width:30px;height:23px;background:linear-gradient(160deg,#7aa0c8 0%,#a8b8c0 40%,#6a9a50 70%,#4a7a30 100%);border-radius:0;filter:blur(0.6px);"></div><div class="a" style="left:72px;top:29px;width:30px;height:16px;background:#ecebe6;border-radius:0;filter:blur(0.5px);"></div><div class="a" style="left:78px;top:44px;width:22px;height:26px;background:#a06a3a;border-radius:0;filter:blur(0.8px);"></div><div class="a" style="left:102px;top:14px;width:44px;height:57px;background:repeating-linear-gradient(90deg,#a09078 0,#a09078 3px,#6a5a48 3px,#6a5a48 4px,#b8ae98 4px,#b8ae98 7px,#5a4c3c 7px,#5a4c3c 8px);border-radius:0;filter:blur(1px);"></div><div class="a" style="left:103px;top:22px;width:40px;height:3px;background:#3a2a20;border-radius:0;filter:blur(0.4px);"></div><div class="a" style="left:103px;top:36px;width:40px;height:3px;background:#3a2a20;border-radius:0;filter:blur(0.4px);"></div><div class="a" style="left:103px;top:49px;width:40px;height:3px;background:#3a2a20;border-radius:0;filter:blur(0.4px);"></div><div class="a" style="left:103px;top:62px;width:40px;height:3px;background:#3a2a20;border-radius:0;filter:blur(0.4px);"></div><div class="a" style="left:143px;top:18px;width:17px;height:47px;background:#f5f5f5;border-radius:0;filter:blur(1.5px);"></div><div class="a" style="left:0px;top:58px;width:160px;height:32px;background:#7a726a;border-radius:0;filter:blur(1.2px);"></div><div class="a" style="left:2px;top:58px;width:25px;height:12px;background:#b09a80;border-radius:0;filter:blur(0.8px);"></div><div class="a" style="left:39px;top:57px;width:40px;height:14px;background:#c8c8d0;border-radius:0;filter:blur(0.8px);"></div><div class="lab" style=""><svg class="a" style="left:0;top:0" width="20" height="20" viewBox="0 0 20 20"><g fill="#e8605c" stroke="none"><rect x="7.3" y="3.6" width="5" height="8" rx="2.5"/><rect x="7.5" y="15" width="4.6" height="1.6"/></g><g stroke="#e8605c" fill="none" stroke-width="1.2"><path d="M5.8 9.8a4 4 0 0 0 8 0"/><path d="M9.8 13.8v1.6"/></g><path d="M3.2 16.8L16.9 3.1" stroke="#2b2b2b" stroke-width="2.4"/><path d="M3.2 16.8L16.9 3.1" stroke="#e8605c" stroke-width="1.3"/></svg>Waldemar Czajkowski</div></div>
<div class="a" style="left:1099px;top:234px;width:168px;height:98px;background:linear-gradient(#d8ea80,#94e040 35%,#8fe03a 60%,#e4f080)"></div>
<div class="tile v" style="left:1103px;top:238px"><div class="a" style="left:0px;top:0px;width:160px;height:90px;background:#8c867a;border-radius:0;"></div><div class="a" style="left:0px;top:0px;width:24px;height:90px;background:linear-gradient(90deg,#7a7872,#8a8880);border-radius:0;filter:blur(0.8px);"></div><div class="a" style="left:24px;top:0px;width:88px;height:72px;background:repeating-linear-gradient(90deg,#f2f2ee 0,#f2f2ee 7px,#d8d8d0 7px,#d8d8d0 9px);border-radius:0;filter:blur(0.8px);"></div><div class="a" style="left:104px;top:0px;width:14px;height:72px;background:#d8d0b0;border-radius:0;filter:blur(1px);"></div><div class="a" style="left:118px;top:0px;width:42px;height:82px;background:linear-gradient(180deg,#8a8070,#9a9282);border-radius:0;filter:blur(1px);"></div><div class="a" style="left:150px;top:0px;width:10px;height:40px;background:#6a5a50;border-radius:0;filter:blur(2px);"></div><div class="a" style="left:0px;top:70px;width:160px;height:20px;background:#3a3a38;border-radius:0;filter:blur(1px);"></div><div class="a" style="left:126px;top:70px;width:34px;height:20px;background:#202020;border-radius:0;filter:blur(1px);"></div><div class="a" style="left:48px;top:40px;width:50px;height:50px;background:#1e1e1e;border-radius:20% 20% 0 0;filter:blur(1px);"></div><div class="a" style="left:38px;top:62px;width:96px;height:30px;background:#22242a;border-radius:30% 30% 0 0;filter:blur(1px);"></div><div class="a" style="left:70px;top:13px;width:36px;height:22px;background:#6e6c68;border-radius:50% 50% 30% 30%;filter:blur(1.2px);"></div><div class="a" style="left:71px;top:24px;width:34px;height:44px;background:#5e4e4a;border-radius:35% 35% 45% 45%;filter:blur(1.2px);"></div><div class="a" style="left:76px;top:66px;width:22px;height:24px;background:#8a96a8;border-radius:0;filter:blur(1px);"></div><div class="a" style="left:84px;top:70px;width:8px;height:20px;background:#1a1a22;border-radius:0;filter:blur(0.8px);"></div><div class="lab nm" style="">DKrawczyk</div></div>
<div class="tile" style="left:937px;top:334px"><div class="big">Pavel Fobel</div><div class="lab" style=""><svg class="a" style="left:0;top:0" width="20" height="20" viewBox="0 0 20 20"><g fill="#e8605c" stroke="none"><rect x="7.3" y="3.6" width="5" height="8" rx="2.5"/><rect x="7.5" y="15" width="4.6" height="1.6"/></g><g stroke="#e8605c" fill="none" stroke-width="1.2"><path d="M5.8 9.8a4 4 0 0 0 8 0"/><path d="M9.8 13.8v1.6"/></g><path d="M3.2 16.8L16.9 3.1" stroke="#2b2b2b" stroke-width="2.4"/><path d="M3.2 16.8L16.9 3.1" stroke="#e8605c" stroke-width="1.3"/></svg>Pavel Fobel</div></div>
<div class="tile" style="left:1103px;top:334px"><div class="big">Katarzyna&nbsp; Dziób...</div><div class="lab" style="right:0;"><svg class="a" style="left:0;top:0" width="20" height="20" viewBox="0 0 20 20"><g fill="#e8605c" stroke="none"><rect x="7.3" y="3.6" width="5" height="8" rx="2.5"/><rect x="7.5" y="15" width="4.6" height="1.6"/></g><g stroke="#e8605c" fill="none" stroke-width="1.2"><path d="M5.8 9.8a4 4 0 0 0 8 0"/><path d="M9.8 13.8v1.6"/></g><path d="M3.2 16.8L16.9 3.1" stroke="#2b2b2b" stroke-width="2.4"/><path d="M3.2 16.8L16.9 3.1" stroke="#e8605c" stroke-width="1.3"/></svg>Katarzyna Dzióba (Ur...</div></div>
<div class="tile" style="left:937px;top:430px"><div class="big">Валентина Яхно</div><div class="lab" style=""><svg class="a" style="left:0;top:0" width="20" height="20" viewBox="0 0 20 20"><g fill="#e8605c" stroke="none"><rect x="7.3" y="3.6" width="5" height="8" rx="2.5"/><rect x="7.5" y="15" width="4.6" height="1.6"/></g><g stroke="#e8605c" fill="none" stroke-width="1.2"><path d="M5.8 9.8a4 4 0 0 0 8 0"/><path d="M9.8 13.8v1.6"/></g><path d="M3.2 16.8L16.9 3.1" stroke="#2b2b2b" stroke-width="2.4"/><path d="M3.2 16.8L16.9 3.1" stroke="#e8605c" stroke-width="1.3"/></svg>Валентина Яхно</div></div>
<div class="tile v" style="left:1103px;top:430px"><div class="a" style="left:0px;top:0px;width:160px;height:90px;background:linear-gradient(180deg,#dcdccc,#d2d2c2);border-radius:0;"></div><div class="a" style="left:17px;top:0px;width:53px;height:48px;background:#2e241c;border-radius:0;filter:blur(0.5px);"></div><div class="a" style="left:24px;top:2px;width:40px;height:41px;background:#eeeeea;border-radius:0;filter:blur(0.5px);"></div><div class="a" style="left:31px;top:7px;width:29px;height:28px;background:#c53a2c;border-radius:2px 2px 40% 40%;filter:blur(0.5px);"></div><div class="a" style="left:37px;top:11px;width:18px;height:17px;background:#e4dcdc;border-radius:40%;filter:blur(1.5px);"></div><div class="a" style="left:108px;top:0px;width:52px;height:50px;background:#2e241c;border-radius:0;filter:blur(0.5px);"></div><div class="a" style="left:114px;top:3px;width:42px;height:42px;background:#e8e8e2;border-radius:0;filter:blur(0.5px);"></div><div class="a" style="left:120px;top:9px;width:30px;height:28px;background:radial-gradient(#d8c8b8 40%,#8a8a80 45%,#e0e0d8 58%);border-radius:50%;filter:blur(0.5px);"></div><div class="a" style="left:58px;top:10px;width:66px;height:80px;background:#c63c22;border-radius:48% 48% 25% 25%;filter:blur(1.4px);"></div><div class="a" style="left:56px;top:40px;width:14px;height:45px;background:#c03820;border-radius:40%;filter:blur(1.5px);"></div><div class="a" style="left:110px;top:40px;width:14px;height:45px;background:#c03820;border-radius:40%;filter:blur(1.5px);"></div><div class="a" style="left:69px;top:18px;width:41px;height:54px;background:#dcb0a8;border-radius:38% 38% 45% 45%;filter:blur(1.1px);"></div><div class="a" style="left:69px;top:14px;width:41px;height:12px;background:#c63c22;border-radius:50% 50% 30% 30%;filter:blur(1.3px);"></div><div class="a" style="left:70px;top:33px;width:18px;height:8px;background:transparent;border-radius:30%;border:1.2px solid #6a6870;filter:blur(.4px)"></div><div class="a" style="left:90px;top:33px;width:19px;height:8px;background:transparent;border-radius:30%;border:1.2px solid #6a6870;filter:blur(.4px)"></div><div class="a" style="left:84px;top:53px;width:12px;height:3px;background:#a87878;border-radius:50%;filter:blur(0.8px);"></div><div class="a" style="left:45px;top:72px;width:100px;height:20px;background:#6a3434;border-radius:30% 30% 0 0;filter:blur(1.5px);"></div><div class="lab nm" style="right:0;">Aleksandra.Kuzior@polsl...</div></div>
<div class="tile" style="left:937px;top:526px"><div class="big">Iwona Szkudlarek</div><div class="lab" style=""><svg class="a" style="left:0;top:0" width="20" height="20" viewBox="0 0 20 20"><g fill="#e8605c" stroke="none"><rect x="7.3" y="3.6" width="5" height="8" rx="2.5"/><rect x="7.5" y="15" width="4.6" height="1.6"/></g><g stroke="#e8605c" fill="none" stroke-width="1.2"><path d="M5.8 9.8a4 4 0 0 0 8 0"/><path d="M9.8 13.8v1.6"/></g><path d="M3.2 16.8L16.9 3.1" stroke="#2b2b2b" stroke-width="2.4"/><path d="M3.2 16.8L16.9 3.1" stroke="#e8605c" stroke-width="1.3"/></svg>Iwona Szkudlarek</div></div>
<div class="tile v" style="left:1103px;top:526px"><div class="a" style="left:40px;top:5px;width:80px;height:80px;overflow:hidden"><div class="a" style="left:0px;top:0px;width:80px;height:80px;background:#c9cdd3;border-radius:0;"></div><div class="a" style="left:0px;top:30px;width:80px;height:50px;background:#cc3636;border-radius:0;filter:blur(0.6px);"></div><div class="a" style="left:74px;top:0px;width:6px;height:26px;background:#6a4a3a;border-radius:0;filter:blur(0.5px);"></div><div class="a" style="left:14px;top:5px;width:52px;height:44px;background:#8c8882;border-radius:50% 50% 20% 20%;filter:blur(1px);"></div><div class="a" style="left:17px;top:9px;width:46px;height:71px;background:#c8a090;border-radius:45% 45% 40% 40%;filter:blur(1.1px);"></div><div class="a" style="left:22px;top:10px;width:36px;height:16px;background:#d0aca0;border-radius:50%;filter:blur(2px);"></div><div class="a" style="left:17px;top:50px;width:46px;height:30px;background:#b4aca4;border-radius:10% 10% 45% 45%;filter:blur(1.3px);"></div><div class="a" style="left:30px;top:58px;width:20px;height:8px;background:#9a7a70;border-radius:40%;filter:blur(1px);"></div><div class="a" style="left:18px;top:37px;width:20px;height:12px;background:transparent;border-radius:30%;border:1.5px solid #9a8a80;filter:blur(.4px)"></div><div class="a" style="left:40px;top:37px;width:22px;height:12px;background:transparent;border-radius:30%;border:1.5px solid #9a8a80;filter:blur(.4px)"></div><div class="a" style="left:58px;top:65px;width:22px;height:15px;background:#cf5a40;border-radius:30% 0 0 0;filter:blur(1px);"></div></div><div class="lab" style=""><svg class="a" style="left:0;top:0" width="20" height="20" viewBox="0 0 20 20"><g fill="#e8605c" stroke="none"><rect x="7.3" y="3.6" width="5" height="8" rx="2.5"/><rect x="7.5" y="15" width="4.6" height="1.6"/></g><g stroke="#e8605c" fill="none" stroke-width="1.2"><path d="M5.8 9.8a4 4 0 0 0 8 0"/><path d="M9.8 13.8v1.6"/></g><path d="M3.2 16.8L16.9 3.1" stroke="#2b2b2b" stroke-width="2.4"/><path d="M3.2 16.8L16.9 3.1" stroke="#e8605c" stroke-width="1.3"/></svg>Józef Ober</div></div>
<div class="tile v" style="left:937px;top:622px"><div class="a" style="left:0px;top:0px;width:160px;height:90px;background:linear-gradient(90deg,#e6e8ea 0%,#dedbd2 35%,#d8d4c8 70%,#cfcabc 100%);border-radius:0;"></div><div class="a" style="left:0px;top:0px;width:30px;height:90px;background:#eef0f2;border-radius:0;filter:blur(3px);"></div><div class="a" style="left:146px;top:0px;width:14px;height:90px;background:#c6c2b4;border-radius:0;filter:blur(1.5px);"></div><div class="a" style="left:54px;top:-4px;width:34px;height:20px;background:#4a3c30;border-radius:50%;filter:blur(0.8px);"></div><div class="a" style="left:58px;top:-2px;width:26px;height:14px;background:#5a4a3a;border-radius:50%;filter:blur(1px);"></div><div class="a" style="left:82px;top:14px;width:40px;height:9px;background:#55604a;border-radius:50%;filter:blur(1.5px);transform:rotate(15deg)"></div><div class="a" style="left:90px;top:30px;width:22px;height:8px;background:#56604c;border-radius:50%;filter:blur(1.5px);"></div><div class="a" style="left:38px;top:22px;width:10px;height:14px;background:#5a6450;border-radius:50%;filter:blur(1.5px);"></div><div class="a" style="left:3px;top:47px;width:40px;height:13px;background:#4a5648;border-radius:50%;filter:blur(1.6px);transform:rotate(12deg)"></div><div class="a" style="left:90px;top:50px;width:14px;height:8px;background:#6a6a5a;border-radius:50%;filter:blur(1.5px);"></div><div class="a" style="left:108px;top:70px;width:35px;height:20px;background:#7a7a58;border-radius:50%;filter:blur(2px);"></div><div class="a" style="left:41px;top:15px;width:49px;height:60px;background:#d6c6bc;border-radius:45% 45% 40% 40%;filter:blur(1.2px);"></div><div class="a" style="left:46px;top:60px;width:40px;height:20px;background:#c8b4aa;border-radius:30%;filter:blur(1.5px);"></div><div class="a" style="left:44px;top:20px;width:40px;height:20px;background:#d8ccc6;border-radius:50%;filter:blur(2px);"></div><div class="a" style="left:38px;top:35px;width:21px;height:14px;background:transparent;border-radius:35%;border:2.6px solid #4a3434;filter:blur(.6px)"></div><div class="a" style="left:60px;top:35px;width:25px;height:14px;background:transparent;border-radius:35%;border:2.6px solid #4a3434;filter:blur(.6px)"></div><div class="a" style="left:62px;top:80px;width:60px;height:12px;background:#d8d6d0;border-radius:30% 30% 0 0;filter:blur(1px);"></div><div class="a" style="left:68px;top:82px;width:14px;height:10px;background:#f4f4f4;border-radius:0;filter:blur(0.8px);"></div><div class="lab" style=""><svg class="a" style="left:0;top:0" width="20" height="20" viewBox="0 0 20 20"><g fill="#e8605c" stroke="none"><rect x="7.3" y="3.6" width="5" height="8" rx="2.5"/><rect x="7.5" y="15" width="4.6" height="1.6"/></g><g stroke="#e8605c" fill="none" stroke-width="1.2"><path d="M5.8 9.8a4 4 0 0 0 8 0"/><path d="M9.8 13.8v1.6"/></g><path d="M3.2 16.8L16.9 3.1" stroke="#2b2b2b" stroke-width="2.4"/><path d="M3.2 16.8L16.9 3.1" stroke="#e8605c" stroke-width="1.3"/></svg>Админ</div></div>
<div class="tile v" style="left:1103px;top:622px"><div class="a" style="left:0px;top:0px;width:160px;height:90px;background:#d6c48c;border-radius:0;"></div><div class="a" style="left:0px;top:0px;width:22px;height:90px;background:linear-gradient(90deg,#f0ecdc,#e4dcc4);border-radius:0;filter:blur(1px);"></div><div class="a" style="left:12px;top:3px;width:96px;height:70px;background:#55485a;border-radius:0;filter:blur(0.7px);"></div><div class="a" style="left:18px;top:7px;width:25px;height:62px;background:#f8f8fb;border-radius:0;filter:blur(0.9px);"></div><div class="a" style="left:48px;top:7px;width:24px;height:62px;background:#f4f4f8;border-radius:0;filter:blur(0.9px);"></div><div class="a" style="left:108px;top:0px;width:52px;height:90px;background:linear-gradient(90deg,#e2d6a8,#d6c48a 30%,#d2c088);border-radius:0;filter:blur(1px);"></div><div class="a" style="left:104px;top:0px;width:5px;height:72px;background:#8a7a6a;border-radius:0;filter:blur(0.8px);"></div><div class="a" style="left:143px;top:45px;width:17px;height:35px;background:#1a2a3a;border-radius:0;filter:blur(1.5px);"></div><div class="a" style="left:150px;top:50px;width:10px;height:25px;background:#8ab0d0;border-radius:0;filter:blur(1.5px);"></div><div class="a" style="left:50px;top:56px;width:20px;height:14px;background:#5a8a70;border-radius:50%;filter:blur(2px);"></div><div class="a" style="left:66px;top:4px;width:46px;height:58px;background:#4a382c;border-radius:45% 45% 35% 35%;filter:blur(1.3px);"></div><div class="a" style="left:72px;top:-2px;width:34px;height:24px;background:#5a4434;border-radius:50%;filter:blur(1.6px);"></div><div class="a" style="left:67px;top:20px;width:40px;height:52px;background:#aa8474;border-radius:40% 40% 45% 45%;filter:blur(1.1px);"></div><div class="a" style="left:67px;top:16px;width:40px;height:10px;background:#4a382c;border-radius:50% 50% 20% 20%;filter:blur(1.2px);"></div><div class="a" style="left:45px;top:70px;width:95px;height:25px;background:#3e3630;border-radius:40% 40% 0 0;filter:blur(1.4px);"></div><div class="lab" style=""><svg class="a" style="left:0;top:0" width="20" height="20" viewBox="0 0 20 20"><g fill="#e8605c" stroke="none"><rect x="7.3" y="3.6" width="5" height="8" rx="2.5"/><rect x="7.5" y="15" width="4.6" height="1.6"/></g><g stroke="#e8605c" fill="none" stroke-width="1.2"><path d="M5.8 9.8a4 4 0 0 0 8 0"/><path d="M9.8 13.8v1.6"/></g><path d="M3.2 16.8L16.9 3.1" stroke="#2b2b2b" stroke-width="2.4"/><path d="M3.2 16.8L16.9 3.1" stroke="#e8605c" stroke-width="1.3"/></svg>Agnieszka Dorożyńska</div></div>
<div class="tile" style="left:937px;top:718px"><div class="big">Hanna Shpakova</div><div class="lab" style=""><svg class="a" style="left:0;top:0" width="20" height="20" viewBox="0 0 20 20"><g fill="#e8605c" stroke="none"><rect x="7.3" y="3.6" width="5" height="8" rx="2.5"/><rect x="7.5" y="15" width="4.6" height="1.6"/></g><g stroke="#e8605c" fill="none" stroke-width="1.2"><path d="M5.8 9.8a4 4 0 0 0 8 0"/><path d="M9.8 13.8v1.6"/></g><path d="M3.2 16.8L16.9 3.1" stroke="#2b2b2b" stroke-width="2.4"/><path d="M3.2 16.8L16.9 3.1" stroke="#e8605c" stroke-width="1.3"/></svg>Hanna Shpakova</div></div>
<div class="tile" style="left:1103px;top:718px"><div class="big">Barbara&nbsp; Przybyl...</div><div class="lab nm" style="right:0;">Barbara Przybylska - Cza...</div></div>
<div class="tile" style="left:937px;top:814px"><div class="big">Andrii Shpakov</div><div class="lab" style=""><svg class="a" style="left:0;top:0" width="20" height="20" viewBox="0 0 20 20"><g fill="#e8605c" stroke="none"><rect x="7.3" y="3.6" width="5" height="8" rx="2.5"/><rect x="7.5" y="15" width="4.6" height="1.6"/></g><g stroke="#e8605c" fill="none" stroke-width="1.2"><path d="M5.8 9.8a4 4 0 0 0 8 0"/><path d="M9.8 13.8v1.6"/></g><path d="M3.2 16.8L16.9 3.1" stroke="#2b2b2b" stroke-width="2.4"/><path d="M3.2 16.8L16.9 3.1" stroke="#e8605c" stroke-width="1.3"/></svg>Andrii Shpakov</div></div>
<div class="tile" style="left:1103px;top:814px"><div class="big">Marek&nbsp; Niezabit...</div><div class="lab" style=""><svg class="a" style="left:0;top:0" width="20" height="20" viewBox="0 0 20 20"><g fill="#e8605c" stroke="none"><rect x="7.3" y="3.6" width="5" height="8" rx="2.5"/><rect x="7.5" y="15" width="4.6" height="1.6"/></g><g stroke="#e8605c" fill="none" stroke-width="1.2"><path d="M5.8 9.8a4 4 0 0 0 8 0"/><path d="M9.8 13.8v1.6"/></g><path d="M3.2 16.8L16.9 3.1" stroke="#2b2b2b" stroke-width="2.4"/><path d="M3.2 16.8L16.9 3.1" stroke="#e8605c" stroke-width="1.3"/></svg>Marek Niezabitowski</div></div>
<!--/GRID-->

<!-- down button -->
<div class="a" style="left:1063px;top:910px;width:74px;height:34px;background:#121212;border-radius:5px"></div>
<svg class="a" style="left:1092px;top:921px" width="16" height="12" viewBox="0 0 16 12"><path d="M2 3l6 6 6-6" stroke="#8a8a9a" stroke-width="2" fill="none"/></svg>

<!-- TOOLBAR -->
<!--TOOLBAR-->
<svg class="a" style="left:36px;top:955px" width="30" height="26" viewBox="0 0 30 26">
<rect x="11" y="1.5" width="8" height="13.5" rx="4" fill="#a8a8a8"/>
<path d="M8.5 10.5a6.5 6.5 0 0 0 13 0" stroke="#a8a8a8" stroke-width="1.8" fill="none"/>
<path d="M15 17.5v5M11 23.5h8" stroke="#a8a8a8" stroke-width="1.8"/>
<path d="M3.5 24.5L26.5 1" stroke="#e0393e" stroke-width="1.6"/>
</svg>
<svg class="a" style="left:84px;top:964px" width="10" height="7" viewBox="0 0 10 7"><path d="M1 5.5l4-4 4 4" stroke="#c8c8c8" stroke-width="1.3" fill="none"/></svg>
<div class="tbtn" style="left:10px;top:984.3px">Включить звук</div>
<svg class="a" style="left:147px;top:960px" width="26" height="16" viewBox="0 0 26 16"><rect x="1" y="1" width="17" height="14" rx="3" fill="#a8a8a8"/><path d="M18 6l6-4v12l-6-4z" fill="#a8a8a8"/></svg>
<svg class="a" style="left:202px;top:964px" width="10" height="7" viewBox="0 0 10 7"><path d="M1 5.5l4-4 4 4" stroke="#c8c8c8" stroke-width="1.3" fill="none"/></svg>
<div class="tbtn" style="left:109px;top:984.3px">Остановить видео</div>
<svg class="a" style="left:452px;top:958px" width="26" height="20" viewBox="0 0 26 20" fill="#a8a8a8"><circle cx="9" cy="5" r="4.2"/><path d="M0.5 19c0-5 3.5-8 8.5-8s8.5 3 8.5 8z"/><circle cx="19" cy="7" r="3.4"/><path d="M15 12.5c1-1 2.5-1.5 4-1.5 4 0 6.5 2.8 6.5 8h-6.5c0-2.5-1.2-5-4-6.5z"/></svg>
<div class="a" style="left:481px;top:958px;font-size:12.5px;color:#d2d2d2">80</div>
<svg class="a" style="left:513px;top:964px" width="10" height="7" viewBox="0 0 10 7"><path d="M1 5.5l4-4 4 4" stroke="#c8c8c8" stroke-width="1.3" fill="none"/></svg>
<div class="tbtn" style="left:436px;top:984.3px">Участники</div>
<svg class="a" style="left:559px;top:958px" width="22" height="20" viewBox="0 0 22 20"><path d="M4 0.5h14a3.5 3.5 0 0 1 3.5 3.5v8a3.5 3.5 0 0 1-3.5 3.5H9l-4.5 4v-4H4A3.5 3.5 0 0 1 0.5 12V4A3.5 3.5 0 0 1 4 0.5z" fill="#a8a8a8"/></svg>
<div class="tbtn" style="left:560px;top:984.3px">Чат</div>
<div class="a" style="left:667px;top:959px;width:24px;height:18px;background:#23d95f;border-radius:3px"></div>
<svg class="a" style="left:673px;top:962px" width="12" height="12" viewBox="0 0 12 12"><path d="M6 11V2M2 5.5L6 1.5l4 4" stroke="#111" stroke-width="1.8" fill="none"/></svg>
<div class="tbtn" style="left:618px;top:984.3px;color:#23d95f">Демонстрация экрана</div>
<svg class="a" style="left:777px;top:957px" width="23" height="22" viewBox="0 0 23 22"><circle cx="11.5" cy="11" r="9.5" stroke="#a8a8a8" stroke-width="1.6" fill="none"/><circle cx="11.5" cy="11" r="7" fill="#a8a8a8"/></svg>
<div class="tbtn" style="left:769px;top:984.3px">Запись</div>
<svg class="a" style="left:858px;top:956px" width="24" height="22" viewBox="0 0 24 22"><circle cx="10.5" cy="12" r="9.5" fill="#a8a8a8"/><path d="M6.5 13.5a4.2 4.2 0 0 0 8 0" stroke="#1a1a1a" stroke-width="1.5" fill="none"/><circle cx="7.5" cy="10" r="1.2" fill="#1a1a1a"/><circle cx="13.5" cy="10" r="1.2" fill="#1a1a1a"/><path d="M20 0.5v6M17 3.5h6" stroke="#a8a8a8" stroke-width="1.6"/></svg>
<div class="tbtn" style="left:846px;top:984.3px">Реакции</div>
<svg class="a" style="left:944px;top:958px" width="19" height="19" viewBox="0 0 19 19"><path d="M1 7V3.5A2.5 2.5 0 0 1 3.5 1H7M12 18h3.5a2.5 2.5 0 0 0 2.5-2.5V12" stroke="#a8a8a8" stroke-width="1.7" fill="none"/><circle cx="14.5" cy="4.5" r="2.7" stroke="#a8a8a8" stroke-width="1.6" fill="none"/><circle cx="4.5" cy="14.5" r="2.7" stroke="#a8a8a8" stroke-width="1.6" fill="none"/></svg>
<div class="tbtn" style="left:917px;top:984.3px">Приложения</div>
<div class="a" style="left:1206px;top:964px;width:62px;height:27px;background:#b72426;border-radius:5px"></div>
<div class="a" style="left:1217.6px;top:970.3px;font-size:11.8px;font-weight:bold;color:#fff">Выйти</div>
<!--/TOOLBAR-->

<!-- TASKBAR -->
<!--TASKBAR-->
<div class="a" style="left:0;top:1004px;width:1280px;height:20px;background:#1c2a32;overflow:hidden">
<svg class="a" style="left:0;top:0" width="520" height="20" viewBox="0 0 520 20">
<path d="M16 0h7.5v5.5L16 5z M24.5 0H32v6.5l-7.5-.8z" fill="#fff"/>
<path d="M66 8l8-8h8l-13 11z" fill="#f39a1e"/><path d="M72 9l10-9h3L75 11z" fill="#fff"/>
<circle cx="124" cy="4" r="11" fill="#1da462"/><path d="M124 4 L135 4 A11 11 0 0 1 119 14 z" fill="#ffcd40"/><circle cx="124" cy="4" r="5" fill="#fff"/><circle cx="124" cy="4" r="3.8" fill="#4a8af4"/>
<circle cx="173" cy="4" r="10.5" fill="#1e9be8"/><circle cx="178" cy="9" r="6" fill="#1478c8"/><path d="M169 3.5c2 1.5 7 1.5 7 4.5s-5 3-7 1.5" stroke="#fff" stroke-width="2" fill="none"/>
<circle cx="222" cy="2" r="10" fill="#7b5cd6"/><rect x="225" y="0" width="16" height="13" rx="3" fill="#e83a3a"/><text x="233" y="10.5" font-family="Liberation Sans" font-size="10" fill="#fff" text-anchor="middle">3</text>
<rect x="259" y="0" width="24" height="9" fill="#f0c040"/><rect x="264" y="3" width="14" height="5" fill="#3b8ad8"/>
<rect x="296" y="0" width="48" height="20" fill="#3c4a52"/>
<rect x="310" y="0" width="20" height="7" rx="3" fill="#2d8cff"/><path d="M314 1h8v4h-8z M323 3l4-2v4z" fill="#fff"/>
<path d="M357 0c0 8 6 13 14 13 3 0 6-1 8-3-3 1-7 0-9-2" fill="#1570c0"/><circle cx="373" cy="1" r="5" fill="#34c0a0"/><path d="M362 0c1 5 5 9 11 9" stroke="#3ab0e8" stroke-width="3" fill="none"/>
<rect x="406" y="0" width="24" height="11" fill="#2b5797"/><rect x="418" y="0" width="13" height="10" fill="#fff"/><path d="M420 2h9M420 4.5h9M420 7h9" stroke="#2b5797" stroke-width="1"/>
<circle cx="467" cy="1" r="10" fill="#9a6ae0"/><circle cx="470" cy="4" r="8" fill="#e070c0" opacity=".6"/><circle cx="462" cy="6" r="5" fill="#3aa0f0" opacity=".8"/>
<g fill="#76b9ed"><rect x="104" y="18" width="40" height="2"/><rect x="202" y="18" width="40" height="2"/><rect x="251" y="18" width="40" height="2"/><rect x="296" y="18" width="48" height="2"/><rect x="349" y="18" width="40" height="2"/><rect x="398" y="18" width="40" height="2"/><rect x="447" y="18" width="41" height="2"/></g>
</svg>
<svg class="a" style="left:1000px;top:0" width="280" height="20" viewBox="0 0 280 20" fill="none" stroke="#fff" stroke-width="1.3">
<path d="M12 5l5-5 5 5"/>
<rect x="36" y="-2" width="9" height="6" rx="2"/><path d="M40.5 4v3M37 8h7"/>
<path d="M61 -1v3a5 5 0 0 0 10 0v-3M63 6h6"/>
<path d="M84 0v5h14v-5M91 5v3M87 8.5h8"/>
<path d="M106 2h3l4-3v9l-4-3h-3z M116 0c1 1 1 4 0 6 M119 -1c2 2 2 6 0 8"/>
<path d="M238 0v5l3 0 3 3 3-3h7v-5"/>
<path d="M274.5 0v20" stroke="#5a6a72" stroke-width="1"/>
</svg>
<div class="a" style="left:1131px;top:-6px;font-size:11.5px;color:#fff">УКР</div>
<div class="a" style="left:1167px;top:0.5px;font-size:12.8px;color:#fff;transform-origin:0 0;transform:scaleX(.82)">10.12.2021</div>
</div>
<!--/TASKBAR-->

</body></html>
